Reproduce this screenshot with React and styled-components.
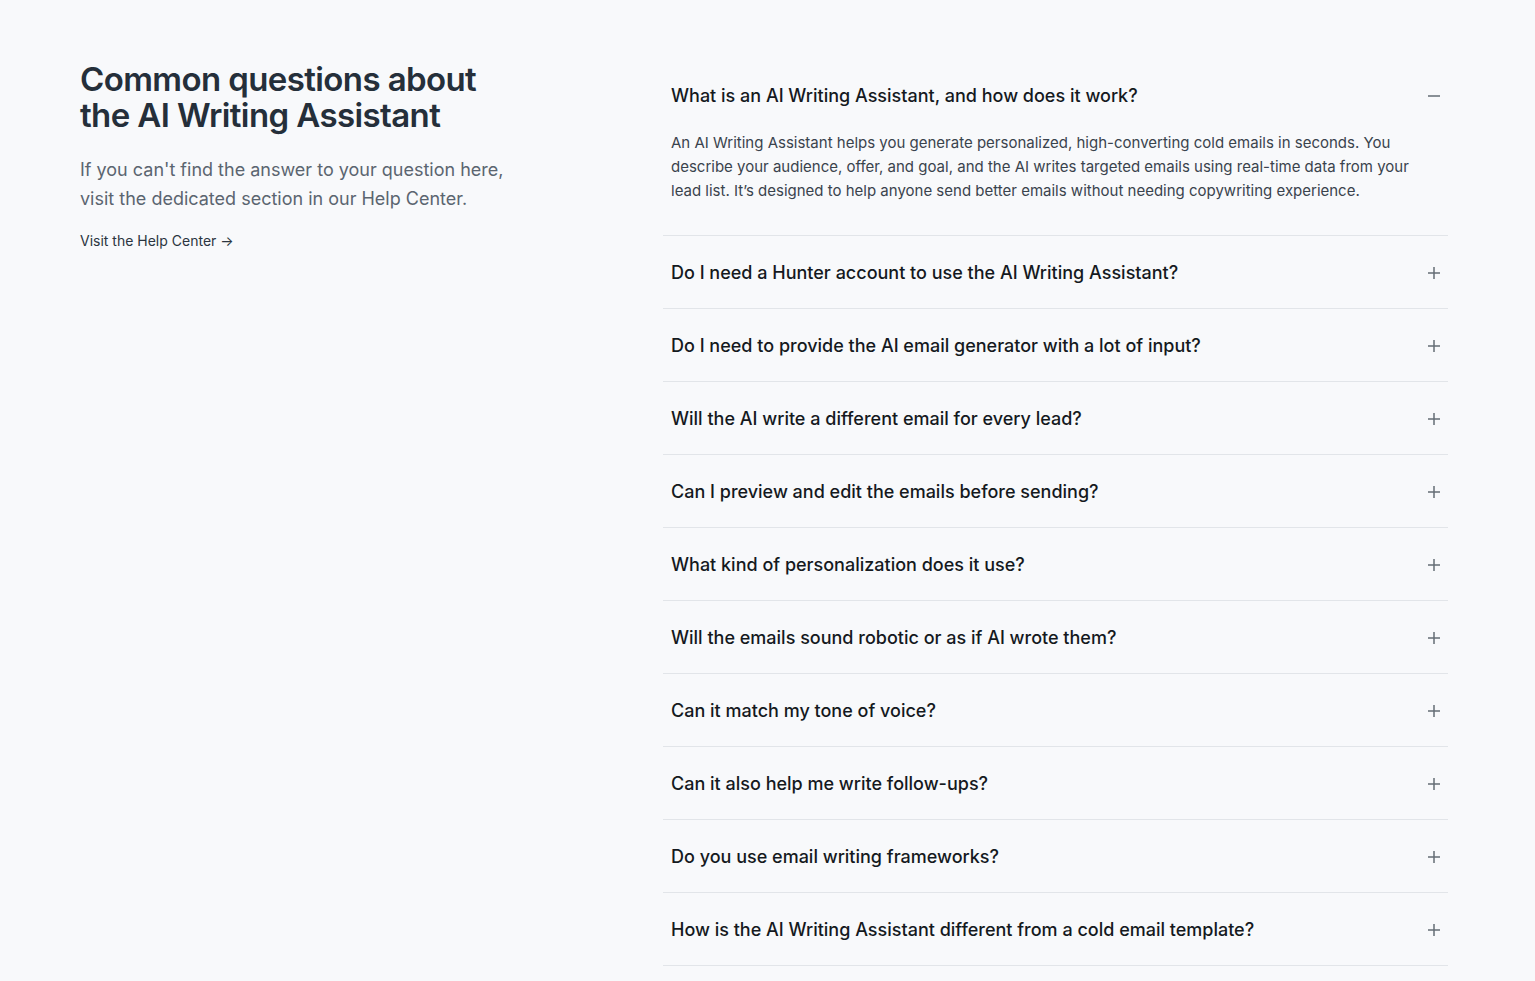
import React, { useState } from "react";
import styled, { createGlobalStyle } from "styled-components";

const Global = createGlobalStyle`
  * { box-sizing: border-box; }
  body { margin: 0; background: #f8f9fb; font-family: Inter, "Noto Sans", sans-serif; }
`;

const Section = styled.section`
  display: grid;
  grid-template-columns: 583px 785px;
  padding: 59px 0 0 80px;
  min-height: 981px;
`;

const Intro = styled.div`
  padding-top: 2px;
  width: 440px;
`;

const Heading = styled.h2`
  margin: 0;
  font-size: 33px;
  line-height: 36px;
  font-weight: 600;
  letter-spacing: -0.6px;
  color: #252f3a;
`;

const Lead = styled.p`
  margin: 22px 0 0;
  font-size: 18px;
  line-height: 29px;
  color: #5b6570;
  width: 440px;
`;

const HelpLink = styled.a`
  display: inline-block;
  margin-top: 18px;
  font-size: 14px;
  line-height: 20px;
  color: #2b3540;
  text-decoration: none;
`;

const List = styled.div`
  display: flex;
  flex-direction: column;
`;

const Item = styled.div`
  border-bottom: 1px solid #e2e5e9;
`;

const Question = styled.button`
  display: flex;
  width: 100%;
  align-items: center;
  justify-content: space-between;
  padding: 25px 8px 23px 8px;
  border: 0;
  background: transparent;
  font-family: inherit;
  font-size: 18px;
  line-height: 24px;
  font-weight: 500;
  color: #15191e;
  text-align: left;
  cursor: pointer;
`;

const Answer = styled.p`
  margin: 0;
  padding: 0 30px 32px 8px;
  font-size: 15px;
  line-height: 24px;
  color: #3a434d;
`;

const Icon = ({ open }) => (
  <svg width="14" height="14" viewBox="0 0 14 14" fill="none" stroke="#656c75" strokeWidth="1.5" style={{ flexShrink: 0, marginRight: -1 }}>
    <path d="M1 7h12" />
    {!open && <path d="M7 1v12" />}
  </svg>
);

const faqs = [
  {
    q: "What is an AI Writing Assistant, and how does it work?",
    a: "An AI Writing Assistant helps you generate personalized, high-converting cold emails in seconds. You describe your audience, offer, and goal, and the AI writes targeted emails using real-time data from your lead list. It’s designed to help anyone send better emails without needing copywriting experience.",
  },
  { q: "Do I need a Hunter account to use the AI Writing Assistant?" },
  { q: "Do I need to provide the AI email generator with a lot of input?" },
  { q: "Will the AI write a different email for every lead?" },
  { q: "Can I preview and edit the emails before sending?" },
  { q: "What kind of personalization does it use?" },
  { q: "Will the emails sound robotic or as if AI wrote them?" },
  { q: "Can it match my tone of voice?" },
  { q: "Can it also help me write follow-ups?" },
  { q: "Do you use email writing frameworks?" },
  { q: "How is the AI Writing Assistant different from a cold email template?" },
];

export default function App() {
  const [open, setOpen] = useState(0);
  return (
    <>
      <Global />
      <Section>
        <Intro>
          <Heading>Common questions about the AI Writing Assistant</Heading>
          <Lead>If you can't find the answer to your question here, visit the dedicated section in our Help Center.</Lead>
          <HelpLink href="#">Visit the Help Center →</HelpLink>
        </Intro>
        <List>
          {faqs.map((f, i) => (
            <Item key={i}>
              <Question onClick={() => setOpen(open === i ? -1 : i)}>
                <span>{f.q}</span>
                <Icon open={open === i} />
              </Question>
              {open === i && f.a && <Answer>{f.a}</Answer>}
            </Item>
          ))}
        </List>
      </Section>
    </>
  );
}
